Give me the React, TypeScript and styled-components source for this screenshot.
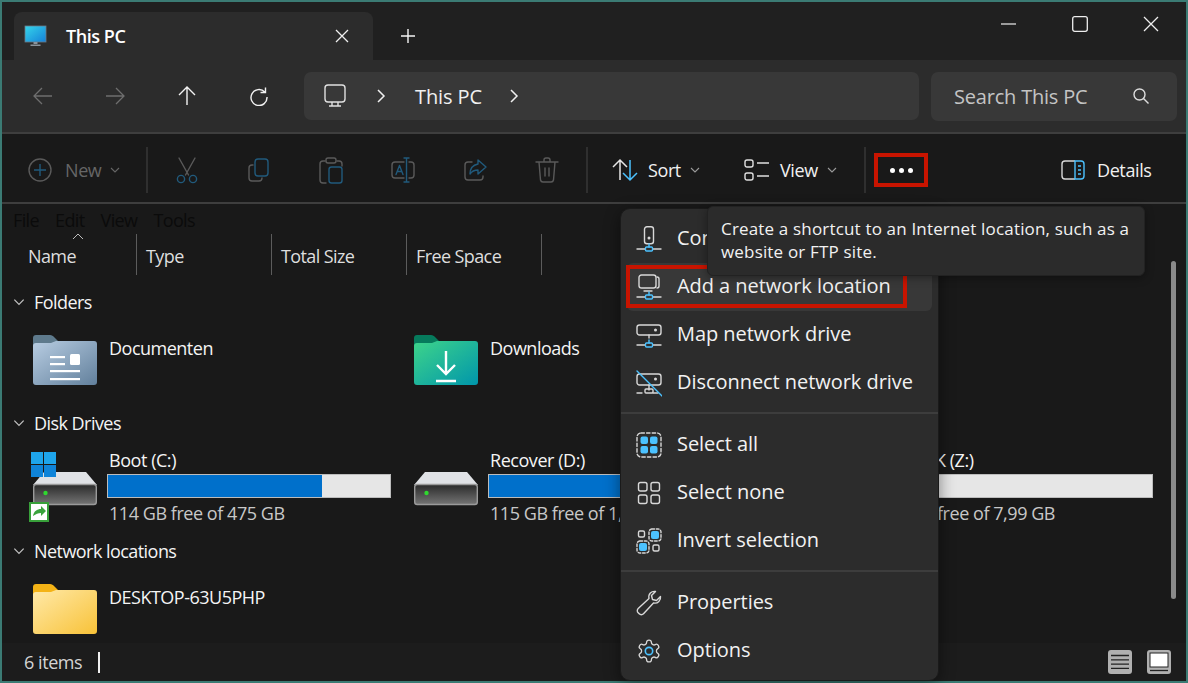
import React from "react";
import styled, { createGlobalStyle } from "styled-components";

const Global = createGlobalStyle`
  html, body { margin: 0; padding: 0; background: #3b7b74; }
  body { font-family: "Open Sans", "Noto Sans", sans-serif; color: #fff; overflow: hidden; }
  * { box-sizing: border-box; }
`;

const Win = styled.div`
  position: relative; width: 1188px; height: 683px; padding: 2px 2px 2px 2px;
  background: #3b7b74; display: flex; flex-direction: column; overflow: hidden;
`;
const TitleBar = styled.div`
  height: 58px; flex: none; background: #202020; display: flex; align-items: flex-end; padding-left: 12px;
`;
const Tab = styled.div`
  width: 359px; height: 48px; background: #2c2c2c; border-radius: 8px 8px 0 0;
  display: flex; align-items: center; padding: 0 10px 0 10px;
`;
const TabTitle = styled.span`
  margin-left: 18px; font-size: 18px; font-weight: 600; letter-spacing: -0.45px; flex: 1;
`;
const TabClose = styled.svg`
  margin-right: 14px;
`;
const TabNew = styled.div`
  width: 60px; height: 48px; margin-left: 5px; margin-right: auto; display: flex; align-items: center; justify-content: center;
`;
const WindowButtons = styled.div`
  display: flex; align-self: flex-start; margin-top: 8px;
`;
const WinBtn = styled.div`
  width: 71px; height: 28px; display: flex; align-items: center; justify-content: center;
`;
const NavBar = styled.div`
  height: 72px; flex: none; background: #2c2c2c; display: flex; align-items: center; padding-left: 5px;
  border-bottom: 0;
`;
const NavBtn = styled.div<{ $off?: boolean }>`
  width: 72px; height: 48px; display: flex; align-items: center; justify-content: center;
  color: ${p => (p.$off ? "#6e6e6e" : "#f2f2f2")};
`;
const AddressBar = styled.div`
  margin-left: 9px; width: 615px; height: 48px; background: #383838; border-radius: 7px;
  display: flex; align-items: center; padding-left: 19px; font-size: 20px; letter-spacing: -0.1px;
`;
const CrumbSep = styled.svg<{ $l: number }>`
  margin-left: ${p => p.$l}px; flex: none;
`;
const Crumb = styled.span`
  margin: 0 0 0 29px; color: #f0f0f0;
`;
const SearchBox = styled.div`
  margin-left: 12px; width: 246px; height: 49px; background: #383838; border-radius: 7px;
  display: flex; align-items: center; justify-content: space-between; padding: 0 27px 0 23px;
  font-size: 20px; letter-spacing: -0.2px; color: #c4c4c4;
`;
const Rule = styled.div`
  height: 2px; flex: none; background: #3e3e3e;
`;
const CommandBar = styled.div`
  height: 68px; flex: none; background: #191919; display: flex; align-items: center; padding: 4px 0 0 25px;
`;
const CmdIcon = styled.div`
  width: 72px; height: 40px; display: flex; align-items: center; justify-content: center;
`;
const CmdText = styled.div<{ $w: number; $off?: boolean }>`
  width: ${p => p.$w}px; height: 40px; display: flex; align-items: center;
  font-size: 18px; letter-spacing: -0.4px; color: ${p => (p.$off ? "#666" : "#f0f0f0")};
`;
const CmdLabel = styled.span<{ $l?: number }>`
  margin: 0 8px 0 ${p => p.$l ?? 10}px;
`;
const CmdSep = styled.div<{ $l?: number; $r?: number }>`
  width: 2px; height: 46px; background: #2f2f2f; flex: none;
  margin-left: ${p => p.$l ?? 0}px; margin-right: ${p => p.$r ?? 0}px;
`;
const MoreBtn = styled.div`
  width: 54px; height: 34px; border: 4px solid #c81400; margin-left: 8px; display: flex;
  align-items: center; justify-content: center; gap: 4px;
`;
const Dot = styled.i`
  width: 5px; height: 5px; border-radius: 50%; background: #fff; display: block;
`;
const DetailsBtn = styled.div`
  margin-left: 132px; display: flex; align-items: center; gap: 11px; font-size: 18px; letter-spacing: -0.4px; color: #f0f0f0;
`;
const Body = styled.div`
  flex: 1; min-height: 0; display: flex; background: #191919;
`;
const Content = styled.div`
  flex: 1; min-width: 0; overflow: hidden;
`;
const MenuStrip = styled.div`
  height: 30px; display: flex; align-items: center; gap: 16px; padding: 2px 0 0 11px; font-size: 18px;
  letter-spacing: -0.62px; color: #0b0b0b;
`;
const HeaderRow = styled.div`
  position: relative; height: 41px; display: flex; padding-left: 26px; margin-bottom: 12px; font-size: 18px;
  letter-spacing: -0.6px; color: #dedede;
`;
const HeaderCell = styled.div<{ $w: number }>`
  width: ${p => p.$w}px; border-right: 1px solid #5c5c5c; display: flex; align-items: center; padding-top: 2px;
  padding-left: 9px; flex: none; position: relative;
  &:first-child { padding-left: 0; }
`;
const SortCaret = styled.svg`
  position: absolute; left: 44px; top: -2px;
`;
const Group = styled.section<{ $gap: number }>`
  margin-bottom: ${p => p.$gap}px;
`;
const GroupHead = styled.div`
  height: 30px; display: flex; align-items: center; padding-left: 10px; gap: 8px;
  font-size: 18px; letter-spacing: -0.55px; color: #f4f4f4;
`;
const Items = styled.div<{ $top: number }>`
  display: grid; grid-template-columns: repeat(3, 381px); padding: ${p => p.$top}px 0 0 25px;
`;
const Item = styled.div`
  display: flex; min-width: 0;
`;
const IconCell = styled.div`
  width: 80px; flex: none;
`;
const ItemName = styled.div`
  font-size: 18px; line-height: 24px; padding: 5px 0 0 2px; letter-spacing: -0.5px; color: #f4f4f4;
`;
const DriveInfo = styled.div`
  width: 284px; font-size: 18px; line-height: 24px; letter-spacing: -0.45px;
`;
const DriveName = styled.div`
  padding: 0 0 2px 2px; line-height: 22px; color: #f4f4f4; white-space: nowrap;
`;
const Bar = styled.div`
  height: 24px; margin: 1px 0 3px; background: #e6e6e6; border: 1px solid #bcbcbc; overflow: hidden;
`;
const BarFill = styled.div`
  height: 100%; background: #0070cb;
`;
const DriveFree = styled.div`
  padding-left: 2px; color: #c8c8c8; white-space: nowrap;
`;
const ScrollRail = styled.div`
  width: 19px; flex: none; padding: 57px 10px 0 4px;
`;
const ScrollThumb = styled.div`
  width: 5px; height: 338px; border-radius: 3px; background: #8a8a8a;
`;
const StatusBar = styled.div`
  height: 38px; flex: none; background: #1c1c1c; display: flex; align-items: center; padding: 0 15px 0 22px;
  font-size: 18px; letter-spacing: -0.45px; color: #d4d4d4;
`;
const StatusCaret = styled.div`
  width: 2px; height: 21px; background: #f0f0f0; margin-left: 16px;
`;
const ViewToggles = styled.div`
  margin-left: auto; display: flex; gap: 15px;
`;
const Menu = styled.div`
  position: absolute; left: 620px; top: 208px; width: 319px; height: 473px; background: #2c2c2c;
  border-radius: 10px; border: 1px solid #1a1a1a; box-shadow: 0 4px 16px rgba(0,0,0,.45); padding: 6px; display: flex; flex-direction: column;
`;
const MenuRow = styled.div<{ $hover?: boolean }>`
  position: relative; height: 48px; flex: none; margin-right: 0; border-radius: 6px; display: flex; align-items: center; padding-left: 9px;
  font-size: 20px; letter-spacing: -0.05px; color: #f2f2f2; white-space: nowrap; background: ${p => (p.$hover ? "#383838" : "transparent")};
`;
const MenuIcon = styled.div`
  width: 41px; flex: none; display: flex; align-items: center;
`;
const MenuLabel = styled.span`
  padding-bottom: 4px;
`;
const MenuSep = styled.div`
  height: 2px; margin: 5px -6px 7px; background: #3d3d3d; flex: none;
`;
const RedBox = styled.div`
  position: absolute; left: -1px; top: 2px; width: 281px; height: 43px; border: 4px solid #c81400; pointer-events: none;
`;
const Tooltip = styled.div`
  position: absolute; left: 707px; top: 206px; width: 438px; height: 70px; background: #2b2b2b; border-radius: 6px;
  border: 1px solid #222; box-shadow: 0 2px 8px rgba(0,0,0,.35); padding: 10px 13px; font-size: 17px; line-height: 23px; letter-spacing: 0.17px; color: #f2f2f2;
`;

const Chev = ({ c = "#9a9a9a", s = 12 }: { c?: string; s?: number }) => (
  <svg width={s} height={s} viewBox="0 0 12 12" fill="none"><path d="M2 4l4 4 4-4" stroke={c} strokeWidth="1.1" /></svg>
);

const S = (p: { w?: number; h?: number; vb: string; children: React.ReactNode; c?: string }) => (
  <svg width={p.w ?? 26} height={p.h ?? 26} viewBox={p.vb} fill="none" stroke={p.c ?? "currentColor"} strokeWidth="1.4" strokeLinecap="round" strokeLinejoin="round">{p.children}</svg>
);

const G = "#5a5a5a";
const B = "#215a7c";
const Blue = "#4cc2ff";

const Scissors = () => (
  <S vb="0 0 26 28" w={26} h={28} c={G}>
    <path d="M5 2l9.5 17M21 2l-9.5 17" /><circle cx="7" cy="23" r="3.6" stroke={B} /><circle cx="19" cy="23" r="3.6" stroke={B} />
  </S>
);
const CopyI = () => (
  <S vb="0 0 26 26" c={G}>
    <path d="M7 8H6a3 3 0 0 0-3 3v10a3 3 0 0 0 3 3h7a3 3 0 0 0 3-3" /><rect x="9" y="2" width="13" height="17" rx="3" stroke={B} />
  </S>
);
const PasteI = () => (
  <S vb="0 0 26 28" w={26} h={28} c={G}>
    <path d="M7 5H5a3 3 0 0 0-3 3v16a3 3 0 0 0 3 3h3M19 5h2a3 3 0 0 1 3 3v2" /><rect x="8" y="2" width="10" height="5" rx="2" />
    <rect x="11" y="11" width="13" height="16" rx="2.5" stroke={B} />
  </S>
);
const RenameI = () => (
  <S vb="0 0 26 28" w={26} h={28} c={G}>
    <path d="M14 6H5a3 3 0 0 0-3 3v10a3 3 0 0 0 3 3h9M19 6h2a3 3 0 0 1 3 3v10a3 3 0 0 1-3 3h-2" />
    <path d="M14 2h5M14 26h5M16.5 2v24M6 18.5l3.5-9 3.500 9M7.200 15.500h4.600" stroke={B} />
  </S>
);
const ShareI = () => (
  <S vb="0 0 26 26" c={G}>
    <path d="M10 5H6a3 3 0 0 0-3 3v12a3 3 0 0 0 3 3h12a3 3 0 0 0 3-3v-1" />
    <path d="M16 3l8 7-8 7v-4c-4 0-6 1-8 4 0-6 3-9 8-10z" stroke={B} />
  </S>
);
const TrashI = () => (
  <S vb="0 0 26 28" w={26} h={28} c={G}>
    <path d="M2 6h22M10 6V4a2 2 0 0 1 2-2h2a2 2 0 0 1 2 2v2M5 6l1.500 18a2.500 2.500 0 0 0 2.500 2h8a2.500 2.500 0 0 0 2.500-2L21 6M11 12v8M15 12v8" />
  </S>
);

const NetBase = () => (
  <g>
    <path d="M1 23h8M17 23h8" stroke="#d8d8d8" /><path d="M13 18v3" stroke={Blue} /><rect x="9.500" y="21" width="7" height="4" rx="1" stroke={Blue} />
  </g>
);
const ConnectI = () => (
  <S vb="0 0 26 27" w={26} h={27} c="#d8d8d8">
    <rect x="8.500" y="0.700" width="9" height="17" rx="2.500" /><circle cx="13" cy="12" r=".8" fill="#d8d8d8" /><NetBase />
  </S>
);
const AddNetI = () => (
  <S vb="0 0 26 27" w={26} h={27} c="#d8d8d8">
    <path d="M21 3a2 2 0 0 1 2 2v7a2 2 0 0 1-2 2" /><rect x="3" y="1" width="17" height="13" rx="2.500" /><path d="M8 17h8" /><NetBase />
  </S>
);
const MapI = () => (
  <S vb="0 0 26 27" w={26} h={27} c="#d8d8d8">
    <rect x="1" y="3" width="24" height="10" rx="2.500" /><circle cx="19.500" cy="8" r=".8" fill="#d8d8d8" /><path d="M13 13v3" /><NetBase />
  </S>
);
const DiscI = () => (
  <S vb="0 0 26 27" w={26} h={27} c="#d8d8d8">
    <rect x="1" y="4" width="24" height="11" rx="2.500" /><circle cx="19.500" cy="9" r=".8" fill="#d8d8d8" />
    <path d="M13 15v5M1 23h5M17 23h5" /><rect x="9" y="19" width="8" height="4" rx="1" />
    <path d="M1 1l25 25" stroke={Blue} />
  </S>
);
const SelAll = () => (
  <S vb="0 0 26 26" c="#d8d8d8">
    <rect x="1" y="1" width="24" height="24" rx="4" strokeDasharray="3.400 2.200" />
    <g fill={Blue} stroke="none"><rect x="4.500" y="4.500" width="7.500" height="7.500" rx="2" /><rect x="14" y="4.500" width="7.500" height="7.500" rx="2" /><rect x="4.500" y="14" width="7.500" height="7.500" rx="2" /><rect x="14" y="14" width="7.500" height="7.500" rx="2" /></g>
  </S>
);
const SelNone = () => (
  <S vb="0 0 26 26" c="#d8d8d8">
    <rect x="2.500" y="2.500" width="8.500" height="8.500" rx="2" /><rect x="15" y="2.500" width="8.500" height="8.500" rx="2" /><rect x="2.500" y="15" width="8.500" height="8.500" rx="2" /><rect x="15" y="15" width="8.500" height="8.500" rx="2" />
  </S>
);
const Invert = () => (
  <S vb="0 0 26 26" c="#d8d8d8">
    <rect x="13" y="1" width="12" height="12" rx="3" strokeDasharray="2.600 1.800" /><rect x="1" y="13" width="12" height="12" rx="3" strokeDasharray="2.600 1.800" />
    <rect x="2.500" y="3" width="6" height="6" rx="1.500" /><rect x="17" y="17" width="6" height="6" rx="1.500" />
    <rect x="15" y="3" width="8" height="8" rx="2" fill={Blue} stroke="none" /><rect x="3" y="15" width="8" height="8" rx="2" fill={Blue} stroke="none" />
  </S>
);
const Wrench = () => (
  <S vb="0 0 26 26" c="#d8d8d8">
    <path d="M24.500 6.500c.5 3.500-2.500 7.500-7 6.500L7.500 23.800a3 3 0 0 1-4.300 0l-1-1a3 3 0 0 1 0-4.300L13 8.500C12 4 15.500 .8 19.500 1.500L15.500 5.500l1 4 4 1z" />
  </S>
);
const Gear = () => (
  <S vb="0 0 24 24" c="#d8d8d8">
    <path strokeWidth="1.200" d="M12.220 2h-.44a2 2 0 0 0-2 2v.18a2 2 0 0 1-1 1.730l-.43.250a2 2 0 0 1-2 0l-.150-.080a2 2 0 0 0-2.730.730l-.220.380a2 2 0 0 0 .730 2.730l.150.100a2 2 0 0 1 1 1.720v.510a2 2 0 0 1-1 1.740l-.150.090a2 2 0 0 0-.730 2.730l.220.380a2 2 0 0 0 2.730.730l.150-.080a2 2 0 0 1 2 0l.430.250a2 2 0 0 1 1 1.730V20a2 2 0 0 0 2 2h.440a2 2 0 0 0 2-2v-.180a2 2 0 0 1 1-1.730l.430-.250a2 2 0 0 1 2 0l.150.080a2 2 0 0 0 2.730-.730l.220-.390a2 2 0 0 0-.730-2.730l-.150-.080a2 2 0 0 1-1-1.740v-.500a2 2 0 0 1 1-1.740l.150-.090a2 2 0 0 0 .730-2.730l-.220-.380a2 2 0 0 0-2.730-.730l-.150.080a2 2 0 0 1-2 0l-.430-.250a2 2 0 0 1-1-1.730V4a2 2 0 0 0-2-2z" />
    <circle cx="12" cy="12" r="3.400" stroke={Blue} strokeWidth="1.500" />
  </S>
);

const FolderShape = styled.svg`
  display: block;
`;
const TAB = "M6 7a3 3 0 0 1 3-3h14c2 0 3 1 4 2l4 4v10H6z";
const FRONT = "M6 15a3 3 0 0 1 3-3h15l5-2h38a3 3 0 0 1 3 3v38a3 3 0 0 1-3 3H9a3 3 0 0 1-3-3z";
const FolderDoc = () => (
  <FolderShape width="80" height="56" viewBox="0 0 80 56">
    <defs><linearGradient id="fd" x1="0" y1="0" x2="1" y2="1"><stop offset="0" stopColor="#b8cde2" /><stop offset="1" stopColor="#62809c" /></linearGradient></defs>
    <path d={TAB} fill="#5e7a8c" />
    <path d={FRONT} fill="url(#fd)" />
    <g fill="#fff"><rect x="23" y="25" width="15" height="2.200" /><rect x="23" y="32" width="15" height="2.200" /><rect x="23" y="39" width="30" height="2.200" /><rect x="23" y="47" width="30" height="2.200" /><rect x="43" y="23" width="10" height="11" rx="1.500" /></g>
  </FolderShape>
);
const FolderDl = () => (
  <FolderShape width="80" height="56" viewBox="0 0 80 56">
    <defs><linearGradient id="fg" x1="0" y1="0" x2="1" y2="1"><stop offset="0" stopColor="#3ed48a" /><stop offset="1" stopColor="#0096ab" /></linearGradient></defs>
    <path d={TAB} fill="#067a5c" />
    <path d={FRONT} fill="url(#fg)" />
    <path d="M38 20v23M29 34l9 9 9-9M28 50h20" stroke="#fff" strokeWidth="2.400" fill="none" />
  </FolderShape>
);
const FolderY = () => (
  <FolderShape width="80" height="56" viewBox="0 0 80 56">
    <defs><linearGradient id="fy" x1="0" y1="0" x2="1" y2="1"><stop offset="0" stopColor="#ffe9a8" /><stop offset="1" stopColor="#f8c238" /></linearGradient></defs>
    <path d={TAB} fill="#f4b316" />
    <path d={FRONT} fill="url(#fy)" />
  </FolderShape>
);
const Drive = ({ id, sys }: { id: string; sys?: boolean }) => (
  <FolderShape width="80" height="76" viewBox="0 0 80 76">
    <defs><linearGradient id={id} x1="0" y1="0" x2="0" y2="1"><stop offset="0" stopColor="#2a2a2a" /><stop offset="1" stopColor="#747474" /></linearGradient></defs>
    <path d="M17 23h42l11 13H6z" fill="#e0e2e6" />
    <rect x="6.700" y="35.500" width="62.600" height="20" rx="2.500" fill={`url(#${id})`} stroke="#9a9a9a" strokeWidth="1.400" />
    <circle cx="18.500" cy="44" r="2.200" fill="#2fd82f" />
    {sys && (
      <g>
        <rect x="4" y="3" width="12" height="12" fill="#1ea5ec" /><rect x="17" y="3" width="12" height="12" fill="#1ea5ec" />
        <rect x="4" y="16" width="12" height="12" fill="#0f84d9" /><rect x="17" y="16" width="12" height="12" fill="#0f84d9" />
        <rect x="3" y="54" width="18" height="18" fill="#fff" stroke="#38a03a" strokeWidth="2" />
        <path d="M6 67c1-5 4-7 8-7v-3l5 5-5 5v-3c-3 0-5 1-8 3z" fill="#3aa33c" />
      </g>
    )}
  </FolderShape>
);
const Pc = () => (
  <svg width="24" height="24" viewBox="0 0 24 24">
    <defs><linearGradient id="pc" x1="0" y1="0" x2="1" y2="1"><stop offset="0" stopColor="#35d5ea" /><stop offset="1" stopColor="#1580d8" /></linearGradient></defs>
    <rect x="1" y="2" width="21" height="16" fill="url(#pc)" stroke="#6b7b88" strokeWidth=".8" /><path d="M9.500 18h4v2h-4zM6.500 20.500h10V22h-10z" fill="#8a939b" />
  </svg>
);

const MENU: [React.ReactNode, string, boolean?][] = [
  [<ConnectI />, "Connect to a Web Site"],
  [<AddNetI />, "Add a network location", true],
  [<MapI />, "Map network drive"],
  [<DiscI />, "Disconnect network drive"],
];

export default function App() {
  return (
    <Win>
      <Global />
      <TitleBar>
        <Tab>
          <Pc />
          <TabTitle>This PC</TabTitle>
          <TabClose width="14" height="14" viewBox="0 0 14 14"><path d="M1 1l12 12M13 1L1 13" stroke="#f0f0f0" strokeWidth="1.300" /></TabClose>
        </Tab>
        <TabNew><svg width="16" height="16" viewBox="0 0 16 16"><path d="M8 1v14M1 8h14" stroke="#f4f4f4" strokeWidth="1.400" /></svg></TabNew>
        <WindowButtons>
          <WinBtn><svg width="16" height="2" viewBox="0 0 16 2"><path d="M0 1h15" stroke="#eee" strokeWidth="1.200" /></svg></WinBtn>
          <WinBtn><svg width="16" height="16" viewBox="0 0 16 16"><rect x=".7" y=".7" width="14.600" height="14.600" rx="2" fill="none" stroke="#eee" strokeWidth="1.300" /></svg></WinBtn>
          <WinBtn><svg width="16" height="16" viewBox="0 0 16 16"><path d="M1 1l14 14M15 1L1 15" stroke="#eee" strokeWidth="1.300" /></svg></WinBtn>
        </WindowButtons>
      </TitleBar>
      <NavBar>
        <NavBtn $off><svg width="20" height="20" viewBox="0 0 20 20" fill="none" stroke="currentColor" strokeWidth="1.300"><path d="M19 10H1M9 2l-8 8 8 8" /></svg></NavBtn>
        <NavBtn $off><svg width="20" height="20" viewBox="0 0 20 20" fill="none" stroke="currentColor" strokeWidth="1.300"><path d="M1 10h18M11 2l8 8-8 8" /></svg></NavBtn>
        <NavBtn><svg width="20" height="20" viewBox="0 0 20 20" fill="none" stroke="currentColor" strokeWidth="1.400"><path d="M10 19V1M2 9l8-8 8 8" /></svg></NavBtn>
        <NavBtn><svg width="20" height="20" viewBox="0 0 20 20" fill="none" stroke="currentColor" strokeWidth="1.400"><path d="M16.500 1.500v5h-5M15.800 6A8 8 0 1 0 18 11" /></svg></NavBtn>
        <AddressBar>
          <svg width="24" height="24" viewBox="0 0 24 24" fill="none" stroke="#e0e0e0" strokeWidth="1.400"><rect x="2" y="1" width="20" height="17" rx="3" /><path d="M9 18v4M15 18v4M6 22h12" /></svg>
          <CrumbSep $l={29} width="10" height="14" viewBox="0 0 10 14" fill="none" stroke="#f0f0f0" strokeWidth="1.500"><path d="M2 1l6 6-6 6" /></CrumbSep>
          <Crumb>This PC</Crumb>
          <CrumbSep $l={27} width="10" height="14" viewBox="0 0 10 14" fill="none" stroke="#f0f0f0" strokeWidth="1.500"><path d="M2 1l6 6-6 6" /></CrumbSep>
        </AddressBar>
        <SearchBox>
          Search This PC
          <svg width="18" height="18" viewBox="0 0 18 18" fill="none" stroke="#ddd" strokeWidth="1.400"><circle cx="7.500" cy="7.500" r="5.500" /><path d="M11.500 11.500l5 5" /></svg>
        </SearchBox>
      </NavBar>
      <Rule />
      <CommandBar>
        <svg width="26" height="26" viewBox="0 0 26 26" fill="none" stroke="#5a5a5a" strokeWidth="1.400"><circle cx="13" cy="13" r="11" /><path d="M13 7v12M7 13h12" stroke={B} /></svg>
        <CmdText $w={93} $off><CmdLabel $l={12}>New</CmdLabel><Chev c="#666" /></CmdText>
        <CmdSep $r={3} />
        <CmdIcon><Scissors /></CmdIcon><CmdIcon><CopyI /></CmdIcon><CmdIcon><PasteI /></CmdIcon><CmdIcon><RenameI /></CmdIcon><CmdIcon><ShareI /></CmdIcon><CmdIcon><TrashI /></CmdIcon>
        <CmdSep $l={3} $r={24} />
        <svg width="26" height="26" viewBox="0 0 26 26" fill="none" strokeWidth="1.500"><path d="M8 23V3M1 10l7-7 7 7" stroke="#e6e6e6" /><path d="M18 3v20M11 16l7 7 7-7" stroke={Blue} /></svg>
        <CmdText $w={106}><CmdLabel>Sort</CmdLabel><Chev /></CmdText>
        <svg width="26" height="24" viewBox="0 0 26 24" fill="none" stroke="#e0e0e0" strokeWidth="1.400"><rect x="1" y="2" width="8" height="7" rx="2" /><rect x="1" y="15" width="8" height="7" rx="2" /><path d="M13 5h12M13 18h12" /></svg>
        <CmdText $w={94}><CmdLabel>View</CmdLabel><Chev /></CmdText>
        <CmdSep />
        <MoreBtn><Dot /><Dot /><Dot /></MoreBtn>
        <DetailsBtn>
          <svg width="26" height="22" viewBox="0 0 26 22" fill="none" strokeWidth="1.400"><path d="M15 2H5a3 3 0 0 0-3 3v12a3 3 0 0 0 3 3h10" stroke="#d8d8d8" /><path d="M15 2h6a3 3 0 0 1 3 3v12a3 3 0 0 1-3 3h-6z" stroke={Blue} /><path d="M18 7h3M18 11h3M18 15h3" stroke={Blue} /></svg>
          Details
        </DetailsBtn>
      </CommandBar>
      <Rule />
      <Body>
        <Content>
          <MenuStrip><span>File</span><span>Edit</span><span>View</span><span>Tools</span></MenuStrip>
          <HeaderRow>
            <HeaderCell $w={109}>
              <SortCaret width="12" height="8" viewBox="0 0 12 8" fill="none"><path d="M1 7l5-5 5 5" stroke="#bbb" strokeWidth="1" /></SortCaret>
              Name
            </HeaderCell>
            <HeaderCell $w={135}>Type</HeaderCell>
            <HeaderCell $w={135}>Total Size</HeaderCell>
            <HeaderCell $w={135}>Free Space</HeaderCell>
          </HeaderRow>
          <Group $gap={21}>
            <GroupHead><Chev c="#c0c0c0" s={14} />Folders</GroupHead>
            <Items $top={14}>
              <Item><IconCell><FolderDoc /></IconCell><ItemName>Documenten</ItemName></Item>
              <Item><IconCell><FolderDl /></IconCell><ItemName>Downloads</ItemName></Item>
            </Items>
          </Group>
          <Group $gap={11}>
            <GroupHead><Chev c="#c0c0c0" s={14} />Disk Drives</GroupHead>
            <Items $top={11}>
              <Item><IconCell><Drive id="d1" sys /></IconCell><DriveInfo><DriveName>Boot (C:)</DriveName><Bar><BarFill style={{ width: "76%" }} /></Bar><DriveFree>114 GB free of 475 GB</DriveFree></DriveInfo></Item>
              <Item><IconCell><Drive id="d2" /></IconCell><DriveInfo><DriveName>Recover (D:)</DriveName><Bar><BarFill style={{ width: "90%" }} /></Bar><DriveFree>115 GB free of 1,81 TB</DriveFree></DriveInfo></Item>
              <Item><IconCell><Drive id="d3" /></IconCell><DriveInfo><DriveName>RAMDISK (Z:)</DriveName><Bar><BarFill style={{ width: "10%" }} /></Bar><DriveFree>7,16 GB free of 7,99 GB</DriveFree></DriveInfo></Item>
            </Items>
          </Group>
          <Group $gap={0}>
            <GroupHead><Chev c="#c0c0c0" s={14} />Network locations</GroupHead>
            <Items $top={14}>
              <Item><IconCell><FolderY /></IconCell><ItemName>DESKTOP-63U5PHP</ItemName></Item>
            </Items>
          </Group>
        </Content>
        <ScrollRail><ScrollThumb /></ScrollRail>
      </Body>
      <StatusBar>
        6 items<StatusCaret />
        <ViewToggles>
          <svg width="24" height="24" viewBox="0 0 24 24"><rect width="24" height="24" rx="3" fill="#b0b0b0" /><path d="M3 5.500h18M3 9.800h18M3 14.100h18M3 18.400h18" stroke="#222" strokeWidth="1.300" /></svg>
          <svg width="24" height="24" viewBox="0 0 24 24"><rect width="24" height="24" rx="3" fill="#b0b0b0" /><rect x="3" y="3" width="18" height="14" fill="#fff" stroke="#222" strokeWidth="1" /><path d="M3 20.500h18" stroke="#222" strokeWidth="1.300" /></svg>
        </ViewToggles>
      </StatusBar>
      <Menu>
        {MENU.map(([icon, label, hover]) => (
          <MenuRow key={label} $hover={hover}>
            <MenuIcon>{icon}</MenuIcon><MenuLabel>{label}</MenuLabel>
            {hover && <RedBox />}
          </MenuRow>
        ))}
        <MenuSep />
        <MenuRow><MenuIcon><SelAll /></MenuIcon><MenuLabel>Select all</MenuLabel></MenuRow>
        <MenuRow><MenuIcon><SelNone /></MenuIcon><MenuLabel>Select none</MenuLabel></MenuRow>
        <MenuRow><MenuIcon><Invert /></MenuIcon><MenuLabel>Invert selection</MenuLabel></MenuRow>
        <MenuSep />
        <MenuRow><MenuIcon><Wrench /></MenuIcon><MenuLabel>Properties</MenuLabel></MenuRow>
        <MenuRow><MenuIcon><Gear /></MenuIcon><MenuLabel>Options</MenuLabel></MenuRow>
      </Menu>
      <Tooltip>Create a shortcut to an Internet location, such as a website or FTP site.</Tooltip>
    </Win>
  );
}
